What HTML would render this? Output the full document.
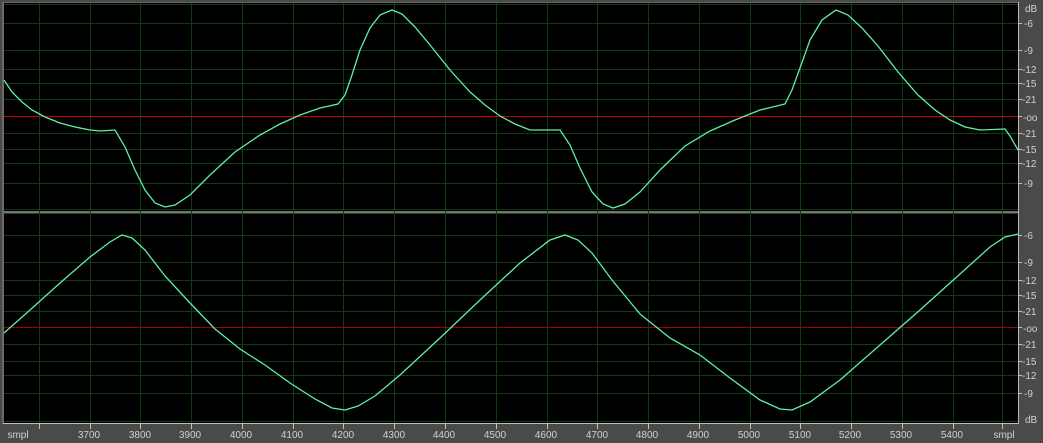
<!DOCTYPE html>
<html><head><meta charset="utf-8"><style>
html,body{margin:0;padding:0;background:#4a4a4a;width:1043px;height:443px;overflow:hidden}
svg{display:block}
text{font-family:"Liberation Sans",sans-serif;font-size:10px;fill:#d0d0d0}
</style></head><body>
<svg width="1043" height="443" viewBox="0 0 1043 443">
<rect x="0" y="0" width="1043" height="443" fill="#4a4a4a"/>
<rect x="2" y="2" width="1017" height="422" fill="#6a6a6a"/>
<rect x="4" y="3" width="1014" height="208" fill="#000"/>
<rect x="4" y="214" width="1014" height="209" fill="#000"/>
<rect x="4" y="211" width="1014" height="3" fill="#3a3a3a"/>
<line x1="4" y1="212" x2="1018" y2="212" stroke="#b0b0b0" stroke-width="1"/>
<g stroke="#0f3d0f" stroke-width="1">
<!-- verticals -->
<g id="v">
<line x1="39.5" y1="3" x2="39.5" y2="423"/><line x1="90.5" y1="3" x2="90.5" y2="423"/><line x1="140.5" y1="3" x2="140.5" y2="423"/><line x1="191.5" y1="3" x2="191.5" y2="423"/><line x1="242.5" y1="3" x2="242.5" y2="423"/><line x1="293.5" y1="3" x2="293.5" y2="423"/><line x1="343.5" y1="3" x2="343.5" y2="423"/><line x1="394.5" y1="3" x2="394.5" y2="423"/><line x1="445.5" y1="3" x2="445.5" y2="423"/><line x1="496.5" y1="3" x2="496.5" y2="423"/><line x1="547.5" y1="3" x2="547.5" y2="423"/><line x1="597.5" y1="3" x2="597.5" y2="423"/><line x1="648.5" y1="3" x2="648.5" y2="423"/><line x1="699.5" y1="3" x2="699.5" y2="423"/><line x1="750.5" y1="3" x2="750.5" y2="423"/><line x1="800.5" y1="3" x2="800.5" y2="423"/><line x1="851.5" y1="3" x2="851.5" y2="423"/><line x1="902.5" y1="3" x2="902.5" y2="423"/><line x1="953.5" y1="3" x2="953.5" y2="423"/><line x1="1002.5" y1="3" x2="1002.5" y2="423"/>
</g>
<line x1="4" y1="4.5" x2="1018" y2="4.5"/>
<line x1="4" y1="23.5" x2="1018" y2="23.5"/><line x1="4" y1="50.5" x2="1018" y2="50.5"/><line x1="4" y1="69.5" x2="1018" y2="69.5"/><line x1="4" y1="83.5" x2="1018" y2="83.5"/><line x1="4" y1="99.5" x2="1018" y2="99.5"/><line x1="4" y1="133.5" x2="1018" y2="133.5"/><line x1="4" y1="149.5" x2="1018" y2="149.5"/><line x1="4" y1="163.5" x2="1018" y2="163.5"/><line x1="4" y1="183.5" x2="1018" y2="183.5"/><line x1="4" y1="209.5" x2="1018" y2="209.5"/>
<line x1="4" y1="235.5" x2="1018" y2="235.5"/><line x1="4" y1="262.5" x2="1018" y2="262.5"/><line x1="4" y1="280.5" x2="1018" y2="280.5"/><line x1="4" y1="295.5" x2="1018" y2="295.5"/><line x1="4" y1="311.5" x2="1018" y2="311.5"/><line x1="4" y1="344.5" x2="1018" y2="344.5"/><line x1="4" y1="361.5" x2="1018" y2="361.5"/><line x1="4" y1="375.5" x2="1018" y2="375.5"/><line x1="4" y1="393.5" x2="1018" y2="393.5"/><line x1="4" y1="421.5" x2="1018" y2="421.5"/>
</g>
<line x1="4" y1="116.5" x2="1018" y2="116.5" stroke="#c80000"/>
<line x1="4" y1="327.5" x2="1018" y2="327.5" stroke="#a00000"/>
<polyline fill="none" stroke="#5ff0a8" stroke-width="1.3" points="4,80 12,92 22,102 32,110 45,117 60,123 75,127 90,130 100,131 115,130 125,147 135,170 145,190 155,203 165,207 175,205 190,195 210,175 235,152 260,135 280,124 300,115 320,108 338,104 345,95 352,75 360,50 370,28 380,15 392,10 402,14 415,27 430,45 450,70 470,92 485,105 500,116 515,124 530,130 560,130 570,145 580,168 592,192 603,204 613,208 625,204 640,192 660,170 685,146 710,131 735,120 760,110 785,104 792,90 800,68 810,40 822,20 836,10 848,15 862,28 878,46 898,72 918,95 935,110 950,120 965,127 980,130 1005,129 1010,136 1018,150"/>
<polyline fill="none" stroke="#5ff0a8" stroke-width="1.3" points="4,333 30,310 60,283 90,257 110,242 122,235 132,238 145,250 165,276 190,303 215,329 240,349 265,365 290,383 315,399 332,408 345,410 358,406 375,396 400,375 440,338 480,300 520,263 550,240 565,235 578,240 592,253 612,280 640,314 670,338 700,355 730,378 760,400 780,409 792,410 810,402 840,380 880,345 920,310 960,274 990,247 1005,237 1018,234"/>
<!-- right axis -->
<rect x="1019" y="0" width="24" height="443" fill="#4a4a4a"/>
<line x1="1018.5" y1="2" x2="1018.5" y2="424" stroke="#b8b8b8"/>
<g stroke="#c0c0c0">
<line x1="1018" y1="23.5" x2="1022" y2="23.5"/><line x1="1018" y1="50.5" x2="1022" y2="50.5"/><line x1="1018" y1="69.5" x2="1022" y2="69.5"/><line x1="1018" y1="83.5" x2="1022" y2="83.5"/><line x1="1018" y1="99.5" x2="1022" y2="99.5"/><line x1="1018" y1="116.5" x2="1022" y2="116.5"/><line x1="1018" y1="133.5" x2="1022" y2="133.5"/><line x1="1018" y1="149.5" x2="1022" y2="149.5"/><line x1="1018" y1="163.5" x2="1022" y2="163.5"/><line x1="1018" y1="183.5" x2="1022" y2="183.5"/>
<line x1="1018" y1="235.5" x2="1022" y2="235.5"/><line x1="1018" y1="262.5" x2="1022" y2="262.5"/><line x1="1018" y1="280.5" x2="1022" y2="280.5"/><line x1="1018" y1="295.5" x2="1022" y2="295.5"/><line x1="1018" y1="311.5" x2="1022" y2="311.5"/><line x1="1018" y1="327.5" x2="1022" y2="327.5"/><line x1="1018" y1="344.5" x2="1022" y2="344.5"/><line x1="1018" y1="361.5" x2="1022" y2="361.5"/><line x1="1018" y1="375.5" x2="1022" y2="375.5"/><line x1="1018" y1="393.5" x2="1022" y2="393.5"/>
</g>
<g>
<text x="1025" y="12">dB</text><text x="1024" y="27">-6</text><text x="1024" y="54">-9</text><text x="1022" y="73">-12</text><text x="1022" y="87">-15</text><text x="1022" y="103">-21</text><text x="1023" y="121">-oo</text><text x="1022" y="137">-21</text><text x="1022" y="153">-15</text><text x="1022" y="167">-12</text><text x="1024" y="187">-9</text>
<text x="1024" y="239">-6</text><text x="1024" y="266">-9</text><text x="1022" y="284">-12</text><text x="1022" y="299">-15</text><text x="1022" y="315">-21</text><text x="1023" y="332">-oo</text><text x="1022" y="348">-21</text><text x="1022" y="365">-15</text><text x="1022" y="379">-12</text><text x="1024" y="397">-9</text><text x="1025" y="423">dB</text>
</g>
<!-- ruler -->
<line x1="3" y1="423.5" x2="1018" y2="423.5" stroke="#c0c0c0"/>
<g stroke="#c0c0c0">
<line x1="39.5" y1="423" x2="39.5" y2="429"/><line x1="90.5" y1="423" x2="90.5" y2="429"/><line x1="140.5" y1="423" x2="140.5" y2="429"/><line x1="191.5" y1="423" x2="191.5" y2="429"/><line x1="242.5" y1="423" x2="242.5" y2="429"/><line x1="293.5" y1="423" x2="293.5" y2="429"/><line x1="343.5" y1="423" x2="343.5" y2="429"/><line x1="394.5" y1="423" x2="394.5" y2="429"/><line x1="445.5" y1="423" x2="445.5" y2="429"/><line x1="496.5" y1="423" x2="496.5" y2="429"/><line x1="547.5" y1="423" x2="547.5" y2="429"/><line x1="597.5" y1="423" x2="597.5" y2="429"/><line x1="648.5" y1="423" x2="648.5" y2="429"/><line x1="699.5" y1="423" x2="699.5" y2="429"/><line x1="750.5" y1="423" x2="750.5" y2="429"/><line x1="800.5" y1="423" x2="800.5" y2="429"/><line x1="851.5" y1="423" x2="851.5" y2="429"/><line x1="902.5" y1="423" x2="902.5" y2="429"/><line x1="953.5" y1="423" x2="953.5" y2="429"/><line x1="1002.5" y1="423" x2="1002.5" y2="429"/>
</g>
<g font-size="10" text-anchor="middle">
<text x="18" y="438">smpl</text>
<text x="89" y="438">3700</text><text x="140" y="438">3800</text><text x="190" y="438">3900</text><text x="241" y="438">4000</text><text x="292" y="438">4100</text><text x="343" y="438">4200</text><text x="394" y="438">4300</text><text x="444" y="438">4400</text><text x="495" y="438">4500</text><text x="546" y="438">4600</text><text x="597" y="438">4700</text><text x="647" y="438">4800</text><text x="698" y="438">4900</text><text x="749" y="438">5000</text><text x="800" y="438">5100</text><text x="850" y="438">5200</text><text x="901" y="438">5300</text><text x="952" y="438">5400</text><text x="1004" y="438">smpl</text>
</g>
</svg>
</body></html>
